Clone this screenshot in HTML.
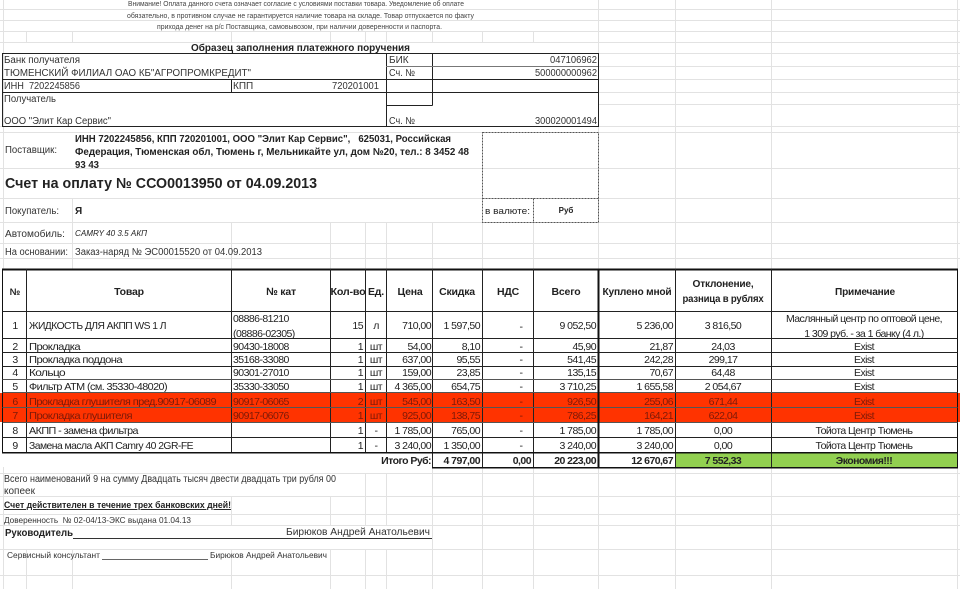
<!DOCTYPE html>
<html><head><meta charset="utf-8"><style>
html,body{margin:0;padding:0;background:#fff;width:960px;height:589px;overflow:hidden}
svg{display:block;filter:blur(.35px)}
text{font-family:"Liberation Sans",sans-serif;fill:#222;font-size:10px;white-space:pre}
.n{font-size:7px;fill:#444}
.a{font-size:10px;fill:#333}
.b{font-weight:bold}
.c{font-size:10.5px;letter-spacing:-.55px}
.h{font-size:10.5px;font-weight:bold;letter-spacing:-.2px;text-anchor:middle;fill:#222}
.e{text-anchor:end}
.m{text-anchor:middle}
.r text,text.r{fill:#7c1a08}
.g{stroke:#e2e2e2;stroke-width:1;fill:none}
.k{stroke:#222;stroke-width:1;fill:none}
.t{stroke:#111;stroke-width:1.3;fill:none}
.d{stroke:#555;stroke-width:1;stroke-dasharray:2 1;fill:none}
</style></head><body>
<svg width="960" height="589" viewBox="0 0 960 589" xmlns="http://www.w3.org/2000/svg" shape-rendering="crispEdges">
<path class="g" d="M0 9.500H960M0 20.500H960M0 31.500H960M0 42.500H960M598 53.500H960M598 66.500H960M598 79.500H960M598 92.500H960M598 104.500H960M0 126.500H960M0 132.500H960M0 168.500H960M0 198.500H960M0 222.500H960M0 243.500H960M0 258.500H960M0 473.500H960M0 496.500H960M0 514.500H960M0 525.500H960M0 549.500H960M0 575.500H960"/>
<path class="g" d="M3.500 0V269M3.500 467V589M26.500 31V42M72.500 31V42M231.500 31V42M330.500 31V42M365.500 31V42M386.500 31V42M432.500 31V42M482.500 31V42M533.500 31V42M72.500 198V269M231.500 222V269M330.500 222V269M365.500 222V269M386.500 222V269M432.500 222V269M482.500 222V269M533.500 222V269M598.500 0V269M675.500 0V269M771.500 0V269M957.500 0V269M26.500 549V589M72.500 549V589M231.500 496V525M231.500 549V589M330.500 496V525M330.500 549V589M365.500 473V525M365.500 549V589M386.500 473V525M386.500 549V589M432.500 467V589M482.500 467V589M533.500 467V589M598.500 467V589M675.500 467V589M771.500 467V589M957.500 467V589"/>
<rect x="0" y="393" width="960" height="29" fill="#ff3300"/>
<rect x="675" y="452" width="282" height="15" fill="#92d050"/>
<text class="n" x="128" y="6" textLength="336" lengthAdjust="spacingAndGlyphs">Внимание! Оплата данного счета означает согласие с условиями поставки товара. Уведомление об оплате</text>
<text class="n" x="127" y="18" textLength="347" lengthAdjust="spacingAndGlyphs">обязательно, в противном случае не гарантируется наличие товара на складе. Товар отпускается по факту</text>
<text class="n" x="157" y="29" textLength="285" lengthAdjust="spacingAndGlyphs">прихода денег на р/с Поставщика, самовывозом, при наличии доверенности и паспорта.</text>
<text class="b" x="191" y="51" textLength="219" lengthAdjust="spacingAndGlyphs">Образец заполнения платежного поручения</text>
<path class="k" d="M2.500 53.500H598.500V126.500H2.500ZM2.500 79.500H598.500M2.500 92.500H598.500M386.500 105.500H432.500M231.500 79.500V92.500M386.500 53.500V126.500M432.500 53.500V105.500"/>
<path d="M386 66.500H598" stroke="#777" fill="none"/>
<text class="a" x="4" y="63" textLength="76" lengthAdjust="spacingAndGlyphs">Банк получателя</text>
<text class="a" x="4" y="76" textLength="247" lengthAdjust="spacingAndGlyphs">ТЮМЕНСКИЙ ФИЛИАЛ ОАО КБ"АГРОПРОМКРЕДИТ"</text>
<text class="a" x="4" y="89" textLength="76" lengthAdjust="spacingAndGlyphs">ИНН  7202245856</text>
<text class="a" x="233" y="89">КПП</text>
<text class="a" x="332" y="89" textLength="47" lengthAdjust="spacingAndGlyphs">720201001</text>
<text class="a" x="4" y="102" textLength="52" lengthAdjust="spacingAndGlyphs">Получатель</text>
<text class="a" x="4" y="124" textLength="107" lengthAdjust="spacingAndGlyphs">ООО "Элит Кар Сервис"</text>
<text class="a" x="389" y="63">БИК</text>
<text class="a" x="389" y="76" textLength="26" lengthAdjust="spacingAndGlyphs">Сч. №</text>
<text class="a" x="389" y="124" textLength="26" lengthAdjust="spacingAndGlyphs">Сч. №</text>
<text class="a e" x="597" y="63" textLength="47" lengthAdjust="spacingAndGlyphs">047106962</text>
<text class="a e" x="597" y="76" textLength="62" lengthAdjust="spacingAndGlyphs">500000000962</text>
<text class="a e" x="597" y="124" textLength="62" lengthAdjust="spacingAndGlyphs">300020001494</text>
<text class="a" x="5" y="153" font-size="9" textLength="52" lengthAdjust="spacingAndGlyphs">Поставщик:</text>
<text class="b" x="75" y="142" textLength="376" lengthAdjust="spacingAndGlyphs">ИНН 7202245856, КПП 720201001, ООО "Элит Кар Сервис",   625031, Российская</text>
<text class="b" x="75" y="155" textLength="394" lengthAdjust="spacingAndGlyphs">Федерация, Тюменская обл, Тюмень г, Мельникайте ул, дом №20, тел.: 8 3452 48</text>
<text class="b" x="75" y="168" textLength="24" lengthAdjust="spacingAndGlyphs">93 43</text>
<text class="b" x="5" y="188" style="font-size:14.500px" textLength="312" lengthAdjust="spacingAndGlyphs">Счет на оплату № ССО0013950 от 04.09.2013</text>
<text class="a" x="5" y="214" textLength="54" lengthAdjust="spacingAndGlyphs">Покупатель:</text>
<text class="b" x="75" y="214">Я</text>
<text class="a" x="5" y="237" textLength="60" lengthAdjust="spacingAndGlyphs">Автомобиль:</text>
<text x="75" y="236" style="font-size:8px;font-style:italic" fill="#444" textLength="72" lengthAdjust="spacingAndGlyphs">CAMRY 40 3.5 АКП</text>
<text class="a" x="5" y="255" textLength="63" lengthAdjust="spacingAndGlyphs">На основании:</text>
<text class="a" x="75" y="255" textLength="187" lengthAdjust="spacingAndGlyphs">Заказ-наряд № ЭС00015520 от 04.09.2013</text>
<path class="d" d="M482.500 132.500H598.500V222.500H482.500ZM482.500 198.500H598.500M533.500 198.500V222.500"/>
<text x="485" y="214" style="font-size:9.500px" textLength="45" lengthAdjust="spacingAndGlyphs">в валюте:</text>
<text class="b m" x="566" y="213" style="font-size:8px">Руб</text>
<path class="t" d="M2.500 269.500V452.500M957.500 269.500V467.500"/>
<path d="M2 269.500H958" stroke="#111" stroke-width="2" fill="none"/>
<path class="k" d="M2.500 311.500H957.500M2.500 338.500H957.500M2.500 352.500H957.500M2.500 366.500H957.500M2.500 437.500H957.500M26.500 269V452M231.500 269V452M330.500 269V452M365.500 269V452M386.500 269V452M432.500 269V467M482.500 269V467M533.500 269V467M675.500 269V467M771.500 269V467"/>
<path d="M2.500 379.500H957.500M2.500 392.500H957.500M2.500 407.500H957.500M2.500 422.500H957.500" stroke="#555" fill="none"/>
<path d="M598.500 269V467" stroke="#111" stroke-width="2" fill="none"/>
<path d="M2 452.500H958M432 467.500H958" stroke="#111" stroke-width="1.500" fill="none"/>
<text class="h" x="15" y="295" style="font-size:9.500px">№</text>
<text class="h" x="129" y="295">Товар</text>
<text class="h" x="281" y="295">№ кат</text>
<text class="h" x="348" y="295" textLength="35" lengthAdjust="spacingAndGlyphs">Кол-во</text>
<text class="h" x="376" y="295">Ед.</text>
<text class="h" x="410" y="295">Цена</text>
<text class="h" x="457" y="295">Скидка</text>
<text class="h" x="508" y="295">НДС</text>
<text class="h" x="566" y="295">Всего</text>
<text class="h" x="637" y="295" textLength="69" lengthAdjust="spacingAndGlyphs">Куплено мной</text>
<text class="h" x="723" y="287" textLength="61" lengthAdjust="spacingAndGlyphs">Отклонение,</text>
<text class="h" x="723" y="302" textLength="81" lengthAdjust="spacingAndGlyphs">разница в рублях</text>
<text class="h" x="865" y="295" textLength="60" lengthAdjust="spacingAndGlyphs">Примечание</text>
<g>
<text class="c m" x="15" y="329">1</text><text class="c" x="29" y="329" textLength="137" lengthAdjust="spacingAndGlyphs">ЖИДКОСТЬ ДЛЯ АКПП WS 1 Л</text><text class="c" x="233" y="322">08886-81210</text><text class="c" x="233" y="337">(08886-02305)</text><text class="c e" x="363" y="329">15</text><text class="c m" x="376" y="329">л</text><text class="c e" x="431" y="329">710,00</text><text class="c e" x="480" y="329">1 597,50</text><text class="c m" x="521" y="330">-</text><text class="c e" x="596" y="329">9 052,50</text><text class="c e" x="673" y="329">5 236,00</text><text class="c m" x="723" y="329">3 816,50</text><text class="c m" x="864" y="322">Маслянный центр по оптовой цене,</text><text class="c m" x="864" y="337">1 309 руб. - за 1 банку (4 л.)</text>
<text class="c m" x="15" y="350">2</text><text class="c" x="29" y="350" textLength="51" lengthAdjust="spacingAndGlyphs">Прокладка</text><text class="c" x="233" y="350">90430-18008</text><text class="c e" x="363" y="350">1</text><text class="c m" x="376" y="350">шт</text><text class="c e" x="431" y="350">54,00</text><text class="c e" x="480" y="350">8,10</text><text class="c m" x="521" y="350">-</text><text class="c e" x="596" y="350">45,90</text><text class="c e" x="673" y="350">21,87</text><text class="c m" x="723" y="350">24,03</text><text class="c m" x="864" y="350">Exist</text>
<text class="c m" x="15" y="363">3</text><text class="c" x="29" y="363" textLength="93" lengthAdjust="spacingAndGlyphs">Прокладка поддона</text><text class="c" x="233" y="363">35168-33080</text><text class="c e" x="363" y="363">1</text><text class="c m" x="376" y="363">шт</text><text class="c e" x="431" y="363">637,00</text><text class="c e" x="480" y="363">95,55</text><text class="c m" x="521" y="363">-</text><text class="c e" x="596" y="363">541,45</text><text class="c e" x="673" y="363">242,28</text><text class="c m" x="723" y="363">299,17</text><text class="c m" x="864" y="363">Exist</text>
<text class="c m" x="15" y="376">4</text><text class="c" x="29" y="376" textLength="36" lengthAdjust="spacingAndGlyphs">Кольцо</text><text class="c" x="233" y="376">90301-27010</text><text class="c e" x="363" y="376">1</text><text class="c m" x="376" y="376">шт</text><text class="c e" x="431" y="376">159,00</text><text class="c e" x="480" y="376">23,85</text><text class="c m" x="521" y="376">-</text><text class="c e" x="596" y="376">135,15</text><text class="c e" x="673" y="376">70,67</text><text class="c m" x="723" y="376">64,48</text><text class="c m" x="864" y="376">Exist</text>
<text class="c m" x="15" y="390">5</text><text class="c" x="29" y="390" textLength="138" lengthAdjust="spacingAndGlyphs">Фильтр АТМ (см. 35330-48020)</text><text class="c" x="233" y="390">35330-33050</text><text class="c e" x="363" y="390">1</text><text class="c m" x="376" y="390">шт</text><text class="c e" x="431" y="390">4 365,00</text><text class="c e" x="480" y="390">654,75</text><text class="c m" x="521" y="390">-</text><text class="c e" x="596" y="390">3 710,25</text><text class="c e" x="673" y="390">1 655,58</text><text class="c m" x="723" y="390">2 054,67</text><text class="c m" x="864" y="390">Exist</text>
</g>
<g class="r">
<text class="c m" x="15" y="405">6</text><text class="c" x="29" y="405" textLength="187" lengthAdjust="spacingAndGlyphs">Прокладка глушителя пред.90917-06089</text><text class="c" x="233" y="405">90917-06065</text><text class="c e" x="363" y="405">2</text><text class="c m" x="376" y="405">шт</text><text class="c e" x="431" y="405">545,00</text><text class="c e" x="480" y="405">163,50</text><text class="c m" x="521" y="405">-</text><text class="c e" x="596" y="405">926,50</text><text class="c e" x="673" y="405">255,06</text><text class="c m" x="723" y="405">671,44</text><text class="c m" x="864" y="405">Exist</text>
<text class="c m" x="15" y="419">7</text><text class="c" x="29" y="419" textLength="103" lengthAdjust="spacingAndGlyphs">Прокладка глушителя</text><text class="c" x="233" y="419">90917-06076</text><text class="c e" x="363" y="419">1</text><text class="c m" x="376" y="419">шт</text><text class="c e" x="431" y="419">925,00</text><text class="c e" x="480" y="419">138,75</text><text class="c m" x="521" y="419">-</text><text class="c e" x="596" y="419">786,25</text><text class="c e" x="673" y="419">164,21</text><text class="c m" x="723" y="419">622,04</text><text class="c m" x="864" y="419">Exist</text>
</g>
<text class="c m" x="15" y="434">8</text><text class="c" x="29" y="434" textLength="109" lengthAdjust="spacingAndGlyphs">АКПП - замена фильтра</text><text class="c e" x="363" y="434">1</text><text class="c m" x="376" y="434">-</text><text class="c e" x="431" y="434">1 785,00</text><text class="c e" x="480" y="434">765,00</text><text class="c m" x="521" y="434">-</text><text class="c e" x="596" y="434">1 785,00</text><text class="c e" x="673" y="434">1 785,00</text><text class="c m" x="723" y="434">0,00</text><text class="c m" x="864" y="434">Тойота Центр Тюмень</text>
<text class="c m" x="15" y="449">9</text><text class="c" x="29" y="449" textLength="164" lengthAdjust="spacingAndGlyphs">Замена масла АКП Camry 40 2GR-FE</text><text class="c e" x="363" y="449">1</text><text class="c m" x="376" y="449">-</text><text class="c e" x="431" y="449">3 240,00</text><text class="c e" x="480" y="449">1 350,00</text><text class="c m" x="521" y="449">-</text><text class="c e" x="596" y="449">3 240,00</text><text class="c e" x="673" y="449">3 240,00</text><text class="c m" x="723" y="449">0,00</text><text class="c m" x="864" y="449">Тойота Центр Тюмень</text>
<text class="c b e" x="431" y="464">Итого Руб:</text><text class="c b e" x="480" y="464">4 797,00</text><text class="c b e" x="531" y="464">0,00</text><text class="c b e" x="596" y="464">20 223,00</text><text class="c b e" x="673" y="464">12 670,67</text><text class="c b m" x="723" y="464">7 552,33</text><text class="c b m" x="864" y="464">Экономия!!!</text>
<text class="a" x="4" y="482" textLength="332" lengthAdjust="spacingAndGlyphs">Всего наименований 9 на сумму Двадцать тысяч двести двадцать три рубля 00</text>
<text class="a" x="4" y="494">копеек</text>
<text class="b" x="4" y="508" text-decoration="underline" style="font-size:9.500px" textLength="227" lengthAdjust="spacingAndGlyphs">Счет действителен в течение трех банковских дней!</text>
<text class="a" x="4" y="523" style="font-size:8.500px" textLength="187" lengthAdjust="spacingAndGlyphs">Доверенность  № 02-04/13-ЭКС выдана 01.04.13</text>
<text class="b" x="5" y="536" textLength="68" lengthAdjust="spacingAndGlyphs">Руководитель</text>
<text class="a e" x="430" y="535" textLength="144" lengthAdjust="spacingAndGlyphs">Бирюков Андрей Анатольевич</text>
<path d="M73 538.500H432" stroke="#333" fill="none"/>
<text class="a" x="7" y="558" style="font-size:8.500px" textLength="93" lengthAdjust="spacingAndGlyphs">Сервисный консультант</text>
<path d="M102 559.500H208" stroke="#666" fill="none"/>
<text class="a" x="210" y="558" style="font-size:8.500px" textLength="117" lengthAdjust="spacingAndGlyphs">Бирюков Андрей Анатольевич</text>
</svg>
</body></html>
